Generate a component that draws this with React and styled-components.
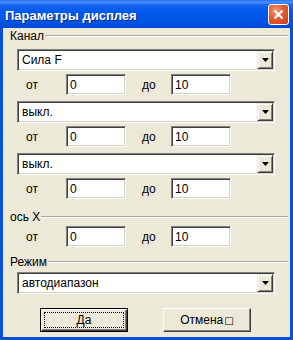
import styled, { createGlobalStyle } from "styled-components";

const GlobalStyle = createGlobalStyle`
  body {
    margin: 0;
    background: #fff;
    font-family: "Liberation Sans", Arial, sans-serif;
  }
`;

const Window = styled.div`
  width: 293px;
  height: 340px;
  display: flex;
  flex-direction: column;
  background: #0a4fd9;
  box-sizing: border-box;
`;

const TitleBar = styled.div`
  height: 28px;
  flex-shrink: 0;
  display: flex;
  align-items: center;
  padding: 0 4px 0 5px;
  background: linear-gradient(
    #2a6ff0 0%,
    #4a90ff 8%,
    #1464f0 18%,
    #0058ea 45%,
    #0054e3 80%,
    #0048d0 100%
  );
`;

const Title = styled.div`
  flex: 1;
  padding-top: 2px;
  color: #fff;
  font-weight: bold;
  font-size: 13px;
  text-shadow: 1px 1px #0a2a90;
`;

const CloseButton = styled.div`
  width: 21px;
  height: 21px;
  box-sizing: border-box;
  border: 1px solid #fff;
  border-radius: 3px;
  background: radial-gradient(circle at 35% 30%, #f29a7c 0%, #e4592f 45%, #cc3c16 100%);
  display: flex;
  align-items: center;
  justify-content: center;
  margin-top: 1px;
`;

const Client = styled.div`
  flex: 1;
  margin: 0 3px 3px;
  background: #ece9d8;
  display: flex;
  flex-direction: column;
  padding: 1px 2px 0 7px;
  font-size: 12px;
  color: #000;
`;

const Header = styled.div`
  display: flex;
  align-items: center;
  height: 14px;
  margin-top: ${(p) => p.$top}px;
`;

const HeaderLabel = styled.span`
  font-size: 12px;
`;

const HeaderLine = styled.div`
  flex: 1;
  margin-left: 1px;
  border-top: 1px solid #aca899;
  border-bottom: 1px solid #fff;
`;

const Combo = styled.div`
  display: flex;
  align-items: center;
  width: 258px;
  height: 22px;
  box-sizing: border-box;
  margin: ${(p) => p.$top}px 0 0 7px;
  background: #fff;
  border: 1px solid;
  border-color: #808080 #fff #fff #808080;
  box-shadow: inset 1px 1px #404040, inset -1px -1px #d4d0c8;
  padding: 1px;
`;

const ComboText = styled.span`
  flex: 1;
  padding-left: 3px;
`;

const DropButton = styled.div`
  width: 16px;
  height: 18px;
  box-sizing: border-box;
  background: #ece9d8;
  border: 1px solid;
  border-color: #ece9d8 #404040 #404040 #ece9d8;
  box-shadow: inset 1px 1px #fff, inset -1px -1px #808080;
  display: flex;
  align-items: center;
  justify-content: center;
`;

const Row = styled.div`
  display: flex;
  align-items: center;
  height: 21px;
  margin-top: ${(p) => p.$top}px;
  padding-left: 16px;
`;

const RowLabel = styled.span`
  width: ${(p) => p.$w}px;
  margin-left: ${(p) => p.$gap || 0}px;
`;

const Field = styled.div`
  width: 60px;
  height: 21px;
  box-sizing: border-box;
  background: #fff;
  border: 1px solid;
  border-color: #808080 #fff #fff #808080;
  box-shadow: inset 1px 1px #404040, inset -1px -1px #d4d0c8;
  padding: 0 3px;
  display: flex;
  align-items: center;
`;

const Buttons = styled.div`
  display: flex;
  gap: 35px;
  margin-top: 14px;
  padding-left: 30px;
`;

const Button = styled.div`
  width: 88px;
  height: 24px;
  box-sizing: border-box;
  background: #ece9d8;
  border: 1px solid;
  border-color: ${(p) => (p.$default ? "#000" : "#fff #404040 #404040 #fff")};
  box-shadow: ${(p) =>
    p.$default
      ? "inset 1px 1px #fff, inset -1px -1px #404040, inset -2px -2px #808080"
      : "inset -1px -1px #808080"};
  display: flex;
  padding: 3px;
`;

const ButtonFace = styled.div`
  flex: 1;
  display: flex;
  align-items: center;
  justify-content: center;
  border: 1px dotted ${(p) => (p.$focus ? "#000" : "transparent")};
  font-size: 12px;
`;

const MissingGlyph = styled.span`
  font-family: "DejaVu Sans", sans-serif;
  font-size: 10px;
  margin-left: 1px;
`;

const Arrow = () => (
  <svg width="7" height="4" viewBox="0 0 7 4">
    <polygon points="0,0 7,0 3.5,4" fill="#000" />
  </svg>
);

const Select = ({ value, top }) => (
  <Combo $top={top}>
    <ComboText>{value}</ComboText>
    <DropButton>
      <Arrow />
    </DropButton>
  </Combo>
);

const Range = ({ top }) => (
  <Row $top={top}>
    <RowLabel $w={40}>от</RowLabel>
    <Field>0</Field>
    <RowLabel $w={29} $gap={16}>
      до
    </RowLabel>
    <Field>10</Field>
  </Row>
);

const App = () => {
  return (
    <>
      <GlobalStyle />
      <Window>
        <TitleBar>
          <Title>Параметры дисплея</Title>
          <CloseButton>
            <svg width="11" height="11" viewBox="0 0 11 11">
              <path d="M1.5 1.5 L9.5 9.5 M9.5 1.5 L1.5 9.5" stroke="#fff" strokeWidth="2.2" />
            </svg>
          </CloseButton>
        </TitleBar>
        <Client>
          <Header $top={0}>
            <HeaderLabel>Канал</HeaderLabel>
            <HeaderLine />
          </Header>
          <Select value="Сила F" top={6} />
          <Range top={3} />
          <Select value="выкл." top={6} />
          <Range top={3} />
          <Select value="выкл." top={6} />
          <Range top={3} />
          <Header $top={11}>
            <HeaderLabel>ось X</HeaderLabel>
            <HeaderLine />
          </Header>
          <Range top={2} />
          <Header $top={8}>
            <HeaderLabel>Режим</HeaderLabel>
            <HeaderLine />
          </Header>
          <Select value="автодиапазон" top={3} />
          <Buttons>
            <Button $default>
              <ButtonFace $focus>Да</ButtonFace>
            </Button>
            <Button>
              <ButtonFace>
                Отмена<MissingGlyph>□</MissingGlyph>
              </ButtonFace>
            </Button>
          </Buttons>
        </Client>
      </Window>
    </>
  );
};

export default App;
